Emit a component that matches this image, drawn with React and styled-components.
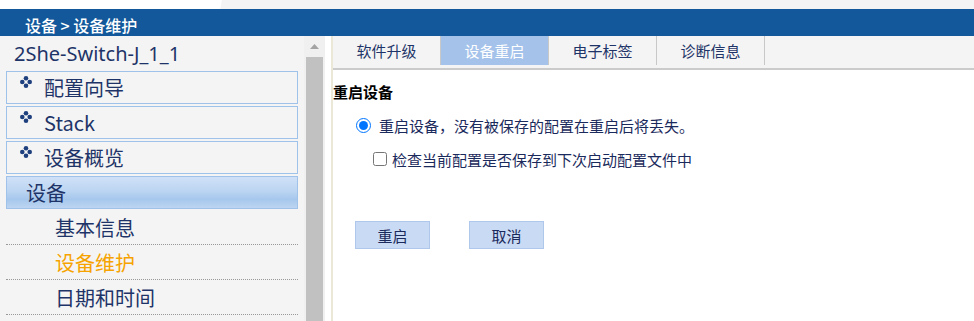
import styled, { createGlobalStyle } from "styled-components";

const Global = createGlobalStyle`
  body {
    margin: 0;
    font-family: "Noto Sans CJK SC", "Noto Sans", sans-serif;
  }
`;

const Page = styled.div`
  width: 974px;
  height: 321px;
  overflow: hidden;
  display: flex;
  flex-direction: column;
`;

const TopStrip = styled.div`
  height: 9px;
  background: linear-gradient(100deg, #ffffff 218px, #f4f4f4 219px);
`;

const Header = styled.div`
  height: 27px;
  background-color: #12589a;
  display: flex;
  align-items: flex-end;
  padding: 0 0 3px 25px;
  box-sizing: border-box;
`;

const Crumb = styled.span`
  color: #fff;
  font-size: 16px;
  font-weight: 500;
  line-height: 1;
  white-space: pre;
`;

const Body = styled.div`
  flex: 1;
  display: flex;
  min-height: 0;
`;

const Sidebar = styled.div`
  width: 304px;
  background-color: #f4f4f4;
  display: flex;
  flex-direction: column;
`;

const DeviceName = styled.div`
  height: 35px;
  line-height: 35px;
  padding-left: 14px;
  font-family: "Noto Sans", sans-serif;
  font-size: 20px;
  color: #1e3468;
`;

const Menu = styled.div`
  padding: 0 6px;
  display: flex;
  flex-direction: column;
  gap: 2px;
`;

const MenuBox = styled.div`
  height: 33px;
  box-sizing: border-box;
  border: 1px solid #9fc2ea;
  display: flex;
  align-items: center;
  gap: 12px;
  padding-left: ${(p) => (p.$active ? "19px" : "13px")};
  font-size: 20px;
  color: #1e3468;
  background: ${(p) =>
    p.$active
      ? "linear-gradient(#cfe1f7 0%, #bcd5f2 45%, #a6c7ec 72%, #bdd5f2 100%)"
      : "transparent"};
`;

const Bullet = styled.svg`
  align-self: flex-start;
  margin-top: 4px;
  flex: none;
`;

const SubList = styled.div`
  display: flex;
  flex-direction: column;
  padding-top: 1px;
`;

const SubItem = styled.div`
  height: 35px;
  box-sizing: border-box;
  border-bottom: 1px dotted #999;
  display: flex;
  align-items: center;
  padding-left: 49px;
  font-size: 20px;
  color: ${(p) => (p.$active ? "#f6a300" : "#1e3468")};
`;

const ScrollTrack = styled.div`
  width: 21px;
  background-color: #f0f0f0;
  display: flex;
  flex-direction: column;
  align-items: center;
`;

const ArrowArea = styled.div`
  height: 21px;
  display: flex;
  align-items: center;
  justify-content: center;
`;

const Thumb = styled.div`
  width: 17px;
  flex: 1;
  background-color: #c1c1c1;
`;

const Gutter = styled.div`
  width: 6px;
  background-color: #fff;
`;

const Content = styled.div`
  flex: 1;
  background-color: #fff;
  border-left: 2px solid #ebe8d7;
  display: flex;
  flex-direction: column;
`;

const TabBar = styled.div`
  height: 34px;
  box-sizing: border-box;
  background-color: #f4f4f4;
  border-bottom: 2px solid #cbcbcb;
  display: flex;
  align-items: flex-start;
`;

const Tab = styled.div`
  width: 107px;
  height: 29px;
  border-right: 1px solid #c8c8c8;
  display: flex;
  align-items: center;
  justify-content: center;
  font-size: 15px;
  color: ${(p) => (p.$active ? "#fff" : "#1e3468")};
  background-color: ${(p) => (p.$active ? "#a4c2ea" : "transparent")};
`;

const Panel = styled.div`
  display: flex;
  flex-direction: column;
`;

const SectionTitle = styled.div`
  margin-top: 11px;
  line-height: 22px;
  font-size: 15px;
  font-weight: 700;
  color: #000;
`;

const OptionRow = styled.label`
  display: flex;
  align-items: center;
  height: 34px;
  padding-left: ${(p) => p.$indent}px;
  font-size: 15px;
  color: #1b2a5c;
  &:first-of-type {
    margin-top: 5px;
  }
`;

const Radio = styled.input`
  width: 15px;
  height: 15px;
  margin: 0 8px 0 0;
`;

const Check = styled.input`
  width: 14px;
  height: 14px;
  margin: 0 5px 0 0;
`;

const Buttons = styled.div`
  display: flex;
  gap: 39px;
  padding-left: 22px;
  margin-top: 45px;
`;

const Button = styled.button`
  width: 75px;
  height: 28px;
  background-color: #c9daf4;
  border: 1px solid #afc7ea;
  color: #1b2a5c;
  font-family: inherit;
  font-size: 15px;
  padding: 0;
  cursor: pointer;
`;

const Diamond = () => (
  <Bullet width="12" height="12" viewBox="0 0 12 12">
    <g fill="#1e3f7e">
      <circle cx="6" cy="2.3" r="2.3" />
      <circle cx="2.3" cy="6" r="2.3" />
      <circle cx="9.7" cy="6" r="2.3" />
      <circle cx="6" cy="9.7" r="2.3" />
    </g>
  </Bullet>
);

const menu = ["配置向导", "Stack", "设备概览"];
const subs = [
  { label: "基本信息" },
  { label: "设备维护", active: true },
  { label: "日期和时间" },
];
const tabs = [
  { label: "软件升级" },
  { label: "设备重启", active: true },
  { label: "电子标签" },
  { label: "诊断信息" },
];

export default function App() {
  return (
    <Page>
      <Global />
      <TopStrip />
      <Header>
        <Crumb>设备 &gt; 设备维护</Crumb>
      </Header>
      <Body>
        <Sidebar>
          <DeviceName>2She-Switch-J_1_1</DeviceName>
          <Menu>
            {menu.map((m) => (
              <MenuBox key={m}>
                <Diamond />
                <span>{m}</span>
              </MenuBox>
            ))}
            <MenuBox $active>设备</MenuBox>
          </Menu>
          <Menu>
            <SubList>
              {subs.map((s) => (
                <SubItem key={s.label} $active={s.active}>
                  {s.label}
                </SubItem>
              ))}
            </SubList>
          </Menu>
        </Sidebar>
        <ScrollTrack>
          <ArrowArea>
            <svg width="9" height="5" viewBox="0 0 9 5">
              <path d="M0 5 L4.5 0 L9 5 Z" fill="#a3a3a3" />
            </svg>
          </ArrowArea>
          <Thumb />
        </ScrollTrack>
        <Gutter />
        <Content>
          <TabBar>
            {tabs.map((t) => (
              <Tab key={t.label} $active={t.active}>
                {t.label}
              </Tab>
            ))}
          </TabBar>
          <Panel>
            <SectionTitle>重启设备</SectionTitle>
            <OptionRow $indent={23}>
              <Radio type="radio" name="reboot" defaultChecked />
              重启设备，没有被保存的配置在重启后将丢失。
            </OptionRow>
            <OptionRow $indent={40}>
              <Check type="checkbox" />
              检查当前配置是否保存到下次启动配置文件中
            </OptionRow>
            <Buttons>
              <Button>重启</Button>
              <Button>取消</Button>
            </Buttons>
          </Panel>
        </Content>
      </Body>
    </Page>
  );
}
